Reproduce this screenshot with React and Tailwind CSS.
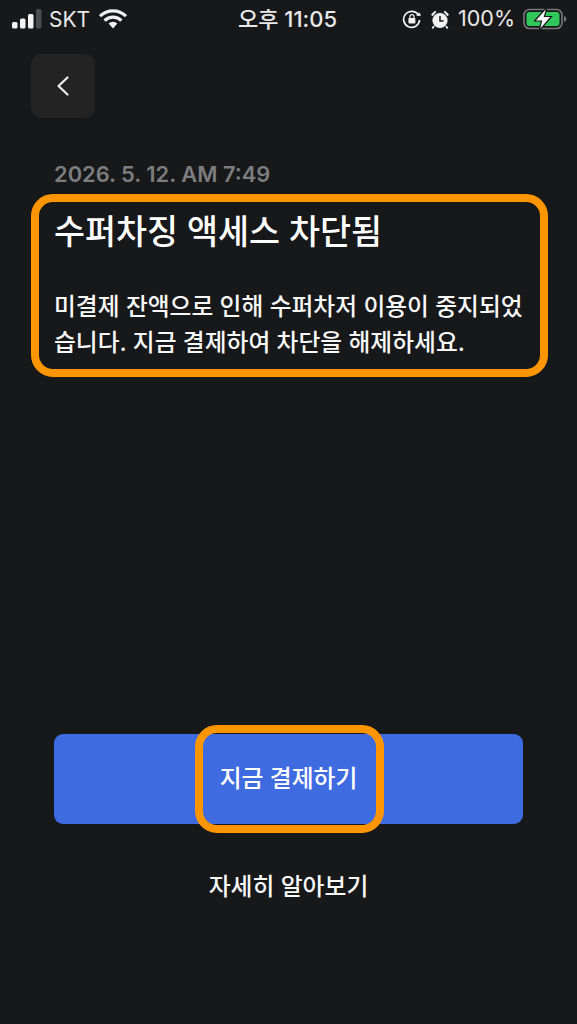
const KR = "font-['Inter','Noto_Sans_CJK_KR',sans-serif]";

function StatusBar() {
  return (
    <div className="flex h-[38px] items-center justify-between pl-[12px] pr-[10px] text-[#e9e9ea]">
      <div className="flex w-[180px] items-center">
        <svg width="30" height="20" viewBox="0 0 30 20" className="mr-[7px]">
          <rect x="0" y="13" width="5.5" height="6.5" rx="1.5" fill="#f2f2f2" />
          <rect x="8" y="9.5" width="5.5" height="10" rx="1.5" fill="#f2f2f2" />
          <rect x="16" y="5" width="5.5" height="14.5" rx="1.5" fill="#f2f2f2" />
          <rect x="24" y="0" width="5.5" height="19.5" rx="1.5" fill="#4b4c4e" />
        </svg>
        <span className="font-['Inter'] text-[21px] leading-none">SKT</span>
        <svg width="28" height="20" viewBox="0 0 28 20" className="ml-[9px]">
          <path d="M1 7.2a18.6 18.6 0 0 1 26 0" fill="none" stroke="#f2f2f2" strokeWidth="3.2" />
          <path d="M5.600 11.600a12 12 0 0 1 16.800 0" fill="none" stroke="#f2f2f2" strokeWidth="3.2" />
          <path d="M9.600 14.600a6.200 6.200 0 0 1 8.800 0L14 19.400z" fill="#f2f2f2" />
        </svg>
      </div>
      <span className={`${KR} -translate-x-[2px] text-[22px] font-medium leading-none`}>오후 11:05</span>
      <div className="flex w-[180px] items-center justify-end">
        <svg width="20" height="20" viewBox="0 0 20 20" className="mr-[8px]">
          <path d="M16.600 6.400A8 8 0 1 0 17.600 11" fill="none" stroke="#f2f2f2" strokeWidth="1.7" />
          <path d="M14.200 6.800h5l-2-3.600z" fill="#f2f2f2" />
          <rect x="6.400" y="9" width="7" height="5.400" rx="1" fill="#f2f2f2" />
          <path d="M8 9.200V7.600a2 2 0 0 1 4 0v1.600" fill="none" stroke="#f2f2f2" strokeWidth="1.2" />
        </svg>
        <svg width="20" height="21" viewBox="0 0 20 21" className="mr-[8px]">
          <circle cx="10" cy="11.500" r="7.600" fill="#f2f2f2" />
          <path d="M10 7v5h3.600" fill="none" stroke="#17181a" strokeWidth="1.5" />
          <path d="M1 5.600 5 1.800 6.400 3 2.400 7.200zM19 5.600 15 1.800 13.600 3l4 4.200z" fill="#f2f2f2" />
          <path d="M4 17l-1.600 2.400M16 17l1.600 2.400" stroke="#f2f2f2" strokeWidth="1.8" />
        </svg>
        <span className="font-['Inter'] text-[21.5px] leading-none">100%</span>
        <svg width="44" height="24" viewBox="0 0 44 24" className="ml-[8px]">
          <rect x="1" y="2.500" width="38" height="19" rx="5.500" fill="none" stroke="#77787a" strokeWidth="1.6" />
          <rect x="3.500" y="5" width="33" height="14" rx="3" fill="#32c75a" />
          <path d="M41 9v6c1.400-.4 2.200-1.600 2.200-3S42.400 9.400 41 9z" fill="#77787a" />
          <path d="M24 0 11.500 14h7L16 24 28.500 9.500h-7z" fill="#f7f7f7" stroke="#17181a" strokeWidth="1.2" />
        </svg>
      </div>
    </div>
  );
}

export default function App() {
  return (
    <div className={`${KR} flex h-[1024px] w-[577px] flex-col overflow-hidden bg-[#17181a] text-white`}>
      <StatusBar />

      <div className="pl-[31px] pt-[16px]">
        <button className="flex h-[64px] w-[64px] items-center justify-center rounded-[10px] bg-[#232324]">
          <svg width="16" height="24" viewBox="0 0 16 24">
            <path d="M12.500 3.500 3.500 12l9 8.500" fill="none" stroke="#eeeeee" strokeWidth="2.200" strokeLinecap="round" strokeLinejoin="round" />
          </svg>
        </button>
      </div>

      <div className="px-[54px] pt-[41px]">
        <div className="text-[21.9px] font-semibold leading-[30px] text-[#7c7d7f]">2026. 5. 12. AM 7:49</div>

        <div className="relative mt-[21px]">
          <h1 className="text-[33.700px] font-medium leading-[44px]">수퍼차징 액세스 차단됨</h1>
          <p className="mt-[35px] whitespace-nowrap text-[23.750px] font-medium leading-[36px] text-[#f8f8f8]">
            미결제 잔액으로 인해 수퍼차저 이용이 중지되었
            <br />
            습니다. 지금 결제하여 차단을 해제하세요.
          </p>
          <div className="absolute bottom-[-16px] left-[-23px] right-[-25px] top-[-16px] rounded-[22px] border-[8px] border-[#ff9500]" />
        </div>
      </div>

      <div className="mt-auto px-[54px] pb-[119px]">
        <div className="relative">
          <button className="flex h-[90px] w-full items-center justify-center rounded-[9px] bg-[#3f6be1] text-[23.800px] font-medium">
            지금 결제하기
          </button>
          <div className="absolute left-[141px] top-[-9px] h-[108px] w-[189px] rounded-[22px] border-[8px] border-[#ff9500]" />
        </div>
        <button className="mt-[45px] block w-full text-center text-[23.800px] font-medium leading-[36px] text-[#f8f8f8]">
          자세히 알아보기
        </button>
      </div>
    </div>
  );
}
